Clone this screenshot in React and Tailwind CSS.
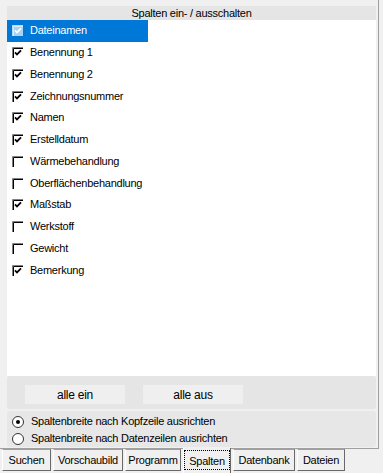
import React from "react";

const items = [
  ["Dateinamen", true],
  ["Benennung 1", true],
  ["Benennung 2", true],
  ["Zeichnungsnummer", true],
  ["Namen", true],
  ["Erstelldatum", true],
  ["Wärmebehandlung", false],
  ["Oberflächenbehandlung", false],
  ["Maßstab", true],
  ["Werkstoff", false],
  ["Gewicht", false],
  ["Bemerkung", true],
];

function Check({ checked, selected }) {
  const line = selected ? "#ffffff" : "#000000";
  const outer = selected ? "#b9dcf6" : "#808080";
  return (
    <svg width="11" height="11" viewBox="0 0 11 11" className="shrink-0">
      {selected && <rect x="0" y="0" width="11" height="11" fill="#a8d2f2" />}
      <path d="M0.5 11 V0.5 H11" stroke={outer} fill="none" />
      <path d="M1.5 11 V1.5 H11" stroke={selected ? "#d9ecfb" : "#000"} fill="none" />
      {checked && (
        <path d="M3 5.3 L5 7.5 L9 3.4" stroke={line} strokeWidth="1.8" fill="none" />
      )}
    </svg>
  );
}

function Radio({ checked }) {
  return (
    <svg width="12" height="12" viewBox="0 0 12 12" className="shrink-0">
      <circle cx="6" cy="6" r="5.5" fill="#ffffff" stroke="#333333" strokeWidth="1" />
      {checked && <circle cx="6" cy="6" r="2" fill="#000" />}
    </svg>
  );
}

const tabs = [
  ["Suchen", "w-[49px]"],
  ["Vorschaubild", "w-[70px]"],
  ["Programm", "w-[56px]"],
  ["Spalten", "w-[48px]"],
  ["Datenbank", "w-[62px]"],
  ["Dateien", "w-[48px]"],
];

export default function App() {
  return (
    <div className="w-[383px] h-[473px] bg-[#f0f0f0] overflow-hidden text-black font-['Liberation_Sans',Arial,sans-serif] text-[11px] tracking-[-0.25px] leading-none">
      <div className="w-[379px] h-[449px] border-r border-b border-[#a0a0a0] pl-[7px] pr-[2px] pt-[6px] flex flex-col">
        <div className="h-[370px] bg-white flex flex-col">
          <div className="h-[14px] bg-[#e5e5e5] flex items-center justify-center">
            Spalten ein- / ausschalten
          </div>
          <div className="flex flex-col">
            {items.map(([label, checked], i) => (
              <div key={label} className="h-[21.75px] flex items-center">
                <div
                  className={
                    i === 0
                      ? "h-full w-[141px] bg-[#0078d7] text-white flex items-center gap-[7px] pl-[5px]"
                      : "h-full flex items-center gap-[7px] pl-[5px]"
                  }
                >
                  <Check checked={checked} selected={i === 0} />
                  <span>{label}</span>
                </div>
              </div>
            ))}
          </div>
        </div>
        <div className="h-[33px] bg-[#e5e5e5] rounded-[3px] flex items-start pt-[9px] pl-[18px] gap-[18px]">
          <div className="w-[100px] h-[19px] bg-[#efefef] flex items-center justify-center text-[12px]">alle ein</div>
          <div className="w-[100px] h-[19px] bg-[#efefef] flex items-center justify-center text-[12px]">alle aus</div>
        </div>
        <div className="mt-[2px] h-[36px] bg-[#e7e7e7] rounded-[3px] flex flex-col pt-[2px] pl-[5px]">
          <div className="h-[18px] flex items-center gap-[7px]">
            <Radio checked />
            <span>Spaltenbreite nach Kopfzeile ausrichten</span>
          </div>
          <div className="h-[18px] flex items-center gap-[7px]">
            <Radio />
            <span>Spaltenbreite nach Datenzeilen ausrichten</span>
          </div>
        </div>
      </div>
      <div className="flex gap-[2px] pl-[2px] -mt-px">
        {tabs.map(([label, w]) =>
          label === "Spalten" ? (
            <div
              key={label}
              className={`${w} h-[25px] bg-[#f0f0f0] border-l border-white border-r border-r-[#696969] flex items-start justify-center pt-[2px]`}
            >
              <div className="border border-dotted border-black px-[2px] h-[20px] flex items-center pt-[3px] w-full">
                <span className="mx-auto">{label}</span>
              </div>
            </div>
          ) : (
            <div
              key={label}
              className={`${w} h-[22px] mt-px bg-[#f0f0f0] border-t border-[#a0a0a0] border-l border-l-white border-r border-r-[#696969] border-b border-b-[#696969] flex items-center justify-center`}
            >
              {label}
            </div>
          )
        )}
      </div>
    </div>
  );
}
